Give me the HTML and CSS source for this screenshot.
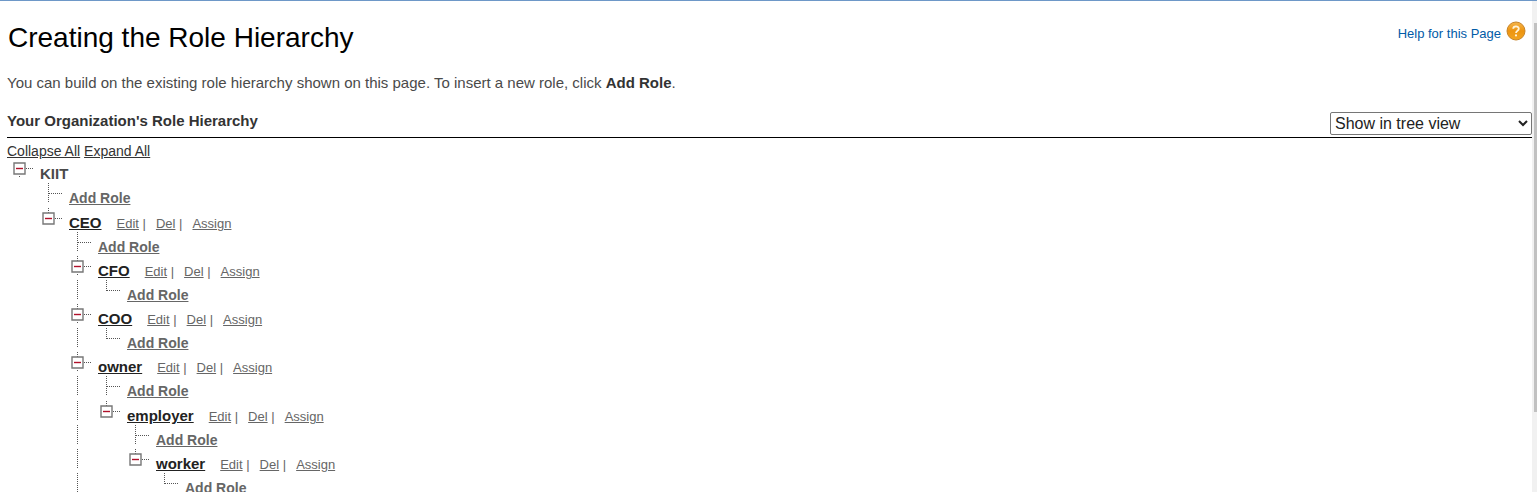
FILE: index.html
```html
<!DOCTYPE html>
<html lang="en">
<head>
<meta charset="utf-8">
<title>Creating the Role Hierarchy</title>
<link rel="stylesheet" href="styles.css">
</head>
<body>
<svg class="sprites" aria-hidden="true">
  <symbol id="guide" viewBox="0 0 20 20"><path class="dots" d="M6.5 0V20"/></symbol>
  <symbol id="tee" viewBox="0 0 20 20"><path class="dots" d="M6.5 0V20M7 10.5H20"/></symbol>
  <symbol id="corner" viewBox="0 0 20 20"><path class="dots" d="M6.5 0V11M7 10.5H20"/></symbol>
  <symbol id="root" viewBox="0 0 20 20"><path class="dots" d="M6.5 18V19M13 10.5H20"/><path class="box" d="M1 5H12V16H1Z"/><path class="minus" d="M3 10.5H10"/></symbol>
  <symbol id="node" viewBox="0 0 20 20"><path class="dots" d="M6.5 0V5M6.5 18V19M13 10.5H20"/><path class="box" d="M1 5H12V16H1Z"/><path class="minus" d="M3 10.5H10"/></symbol>
  <symbol id="last" viewBox="0 0 20 20"><path class="dots" d="M6.5 0V5M13 10.5H20"/><path class="box" d="M1 5H12V16H1Z"/><path class="minus" d="M3 10.5H10"/></symbol>
</svg>
<div class="page">
<main class="content">
  <header class="page-head">
    <h1>Creating the Role Hierarchy</h1>
    <a class="help" href="#">Help for this Page
      <svg class="help-icon" viewBox="0 0 20 20" aria-hidden="true">
        <defs><linearGradient id="orange" x1="0" y1="0" x2="0" y2="1"><stop offset="0" stop-color="#f5b54a"/><stop offset=".5" stop-color="#ed9410"/><stop offset="1" stop-color="#f2a522"/></linearGradient></defs>
        <circle cx="10" cy="10" r="9" fill="url(#orange)" stroke="#c88428"/>
        <path d="M7.2 7.8C7.2 4.6 12.8 4.6 12.8 7.7C12.8 9.7 10 9.7 10 12" fill="none" stroke="#fff3d8" stroke-width="1.8"/>
        <circle cx="10" cy="14.4" r="1.1" fill="#fff3d8"/>
      </svg>
    </a>
  </header>
  <p class="intro">You can build on the existing role hierarchy shown on this page. To insert a new role, click <strong>Add Role</strong>.</p>
  <div class="section-head">
    <h2>Your Organization's Role Hierarchy</h2>
    <select class="view" aria-label="View"><option>Show in tree view</option><option>Show in sorted list view</option><option>Show in list view</option></select>
  </div>
  <nav class="toggles"><a href="#">Collapse All</a> <a href="#">Expand All</a></nav>
  <ul class="tree">
    <li>
      <div class="row tall"><button class="toggle" aria-label="Collapse KIIT"><svg class="tile"><use href="#root"/></svg></button><span class="org">KIIT</span></div>
      <ul>
        <li class="row tall d1"><svg class="tile"><use href="#tee"/></svg><a class="add" href="#">Add Role</a></li>
        <li>
          <div class="row d1"><button class="toggle" aria-label="Collapse CEO"><svg class="tile"><use href="#last"/></svg></button><a class="role" href="#">CEO</a><span class="actions"><span><a href="#">Edit</a> |</span><span><a href="#">Del</a> |</span><a href="#">Assign</a></span></div>
          <ul>
            <li class="row d2"><svg class="tile"><use href="#tee"/></svg><a class="add" href="#">Add Role</a></li>
            <li>
              <div class="row d2"><button class="toggle" aria-label="Collapse CFO"><svg class="tile"><use href="#node"/></svg></button><a class="role" href="#">CFO</a><span class="actions"><span><a href="#">Edit</a> |</span><span><a href="#">Del</a> |</span><a href="#">Assign</a></span></div>
              <ul>
                <li class="row d2"><svg class="tile"><use href="#guide"/></svg><svg class="tile"><use href="#corner"/></svg><a class="add" href="#">Add Role</a></li>
              </ul>
            </li>
            <li>
              <div class="row d2"><button class="toggle" aria-label="Collapse COO"><svg class="tile"><use href="#node"/></svg></button><a class="role" href="#">COO</a><span class="actions"><span><a href="#">Edit</a> |</span><span><a href="#">Del</a> |</span><a href="#">Assign</a></span></div>
              <ul>
                <li class="row d2"><svg class="tile"><use href="#guide"/></svg><svg class="tile"><use href="#corner"/></svg><a class="add" href="#">Add Role</a></li>
              </ul>
            </li>
            <li>
              <div class="row d2"><button class="toggle" aria-label="Collapse owner"><svg class="tile"><use href="#node"/></svg></button><a class="role" href="#">owner</a><span class="actions"><span><a href="#">Edit</a> |</span><span><a href="#">Del</a> |</span><a href="#">Assign</a></span></div>
              <ul>
                <li class="row tall d2"><svg class="tile"><use href="#guide"/></svg><svg class="tile"><use href="#tee"/></svg><a class="add" href="#">Add Role</a></li>
                <li>
                  <div class="row d2"><svg class="tile"><use href="#guide"/></svg><button class="toggle" aria-label="Collapse employer"><svg class="tile"><use href="#last"/></svg></button><a class="role" href="#">employer</a><span class="actions"><span><a href="#">Edit</a> |</span><span><a href="#">Del</a> |</span><a href="#">Assign</a></span></div>
                  <ul>
                    <li class="row d2"><svg class="tile"><use href="#guide"/></svg><svg class="tile"></svg><svg class="tile"><use href="#tee"/></svg><a class="add" href="#">Add Role</a></li>
                    <li>
                      <div class="row d2"><svg class="tile"><use href="#guide"/></svg><svg class="tile"></svg><button class="toggle" aria-label="Collapse worker"><svg class="tile"><use href="#last"/></svg></button><a class="role" href="#">worker</a><span class="actions"><span><a href="#">Edit</a> |</span><span><a href="#">Del</a> |</span><a href="#">Assign</a></span></div>
                      <ul>
                        <li class="row d2"><svg class="tile"><use href="#guide"/></svg><svg class="tile"></svg><svg class="tile"></svg><svg class="tile"><use href="#corner"/></svg><a class="add" href="#">Add Role</a></li>
                      </ul>
                    </li>
                  </ul>
                </li>
              </ul>
            </li>
          </ul>
        </li>
      </ul>
    </li>
  </ul>
</main>
<div class="scrollbar"><div class="thumb"></div></div>
</div>
</body>
</html>
```
FILE: styles.css
```css
* { box-sizing: border-box; }
body {
  margin: 0;
  height: 100vh;
  overflow: hidden;
  background: #fff;
  color: #4a4a4a;
  font-family: "Liberation Sans", Arial, sans-serif;
  font-size: 15px;
}
.sprites { display: none; }
.dots { fill: none; stroke: #555; stroke-dasharray: 1 1; }
.box { fill: #fff; stroke: #777; stroke-width: 1.4; }
.minus { stroke: #b0102a; stroke-width: 1.4; }
.page { display: flex; height: 100vh; border-top: 1px solid #6e98c8; }
.content { flex: 1; min-width: 0; overflow: hidden; padding-left: 7px; }
.scrollbar { width: 5px; padding: 22px 0 0 2px; background: #f1f1f1; }
.thumb { height: 83%; background: #c1c1c1; }
.page-head { display: flex; justify-content: space-between; padding: 20px 6px 0 1px; }
h1 { margin: 0; font-size: 28px; line-height: 34px; font-weight: 400; color: #000; }
.help { display: flex; gap: 5px; height: 20px; color: #015ba7; font-size: 13px; line-height: 26px; text-decoration: none; }
.help-icon { width: 20px; height: 20px; }
.intro { margin: 19px 0 0; line-height: 18px; }
strong { color: #333; }
.section-head { display: flex; justify-content: space-between; margin-top: 19px; height: 27px; border-bottom: 1px solid #000; }
h2 { margin: 0; padding-top: 1px; font-size: 15px; line-height: 18px; color: #333; }
.view { width: 202px; height: 23px; margin-top: 1px; border: 1px solid #767676; border-radius: 2px; background: #fff; color: #222; font: 16px "Liberation Sans", Arial, sans-serif; }
.toggles { height: 20px; padding-top: 5px; font-size: 14px; line-height: 16px; }
.toggles a { color: #333; }
ul { margin: 0; padding: 0; list-style: none; }
.tree { padding-left: 6px; }
.row { display: flex; height: 24px; line-height: 19px; white-space: nowrap; }
.tall { height: 25px; }
.d1 { padding-left: 29px; }
.d2 { padding-left: 58px; }
.tile { display: block; flex: none; width: 20px; height: 20px; margin-right: 9px; }
.toggle { flex: none; align-self: flex-start; padding: 0; border: 0; background: none; }
.org, .role, .add { margin-left: -2px; font-weight: 700; }
.org, .add { padding-top: 6px; }
.org { color: #4a4a4a; }
.role { padding-top: 5px; color: #222; }
.add { font-size: 14px; color: #666; }
.actions { display: flex; gap: 10px; margin-left: 15px; padding-top: 6px; font-size: 13px; color: #666; }
.actions a { color: #666; }
```
